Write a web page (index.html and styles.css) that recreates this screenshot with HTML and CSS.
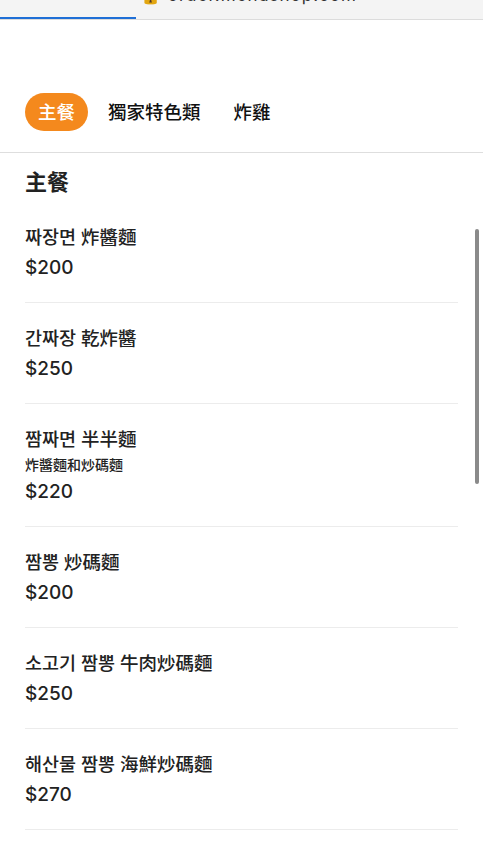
FILE: index.html
```html
<!DOCTYPE html>
<html lang="zh-Hant">
<head>
  <meta charset="UTF-8">
  <meta name="viewport" content="width=device-width, initial-scale=1.0">
  <title>菜單</title>
  <link rel="stylesheet" href="styles.css">
</head>
<body>
  <div class="urlbar">
    <div class="url">&#128274; order.menushop.com</div>
    <div class="progress"></div>
  </div>

  <nav class="tabs">
    <a class="tab active">主餐</a>
    <a class="tab">獨家特色類</a>
    <a class="tab">炸雞</a>
  </nav>

  <main class="menu">
    <h2>主餐</h2>

    <div class="item">
      <div class="name">짜장면 炸醬麵</div>
      <div class="price">$200</div>
    </div>
    <div class="item">
      <div class="name">간짜장 乾炸醬</div>
      <div class="price">$250</div>
    </div>
    <div class="item">
      <div class="name">짬짜면 半半麵</div>
      <div class="desc">炸醬麵和炒碼麵</div>
      <div class="price">$220</div>
    </div>
    <div class="item">
      <div class="name">짬뽕 炒碼麵</div>
      <div class="price">$200</div>
    </div>
    <div class="item">
      <div class="name">소고기 짬뽕 牛肉炒碼麵</div>
      <div class="price">$250</div>
    </div>
    <div class="item">
      <div class="name">해산물 짬뽕 海鮮炒碼麵</div>
      <div class="price">$270</div>
    </div>
  </main>

  <div class="scroll-thumb"></div>
</body>
</html>
```

FILE: styles.css
```css
body {
  margin: 0;
  font-family: Inter, "Noto Sans CJK TC", sans-serif;
  color: #222;
  background: #fff;
  overflow: hidden;
}
.urlbar {
  height: 19px;
  background: #f4f4f4;
  border-bottom: 1px solid #dcdcdc;
  overflow: hidden;
  display: flex;
  flex-direction: column;
}
.url {
  margin-top: -13px;
  padding-left: 140px;
  font-size: 17px;
  line-height: 17px;
  color: #333;
  letter-spacing: 1px;
}
.progress {
  margin-top: 13px;
  width: 136px;
  height: 3px;
  background: #1f6fd6;
}
.tabs {
  display: flex;
  gap: 7px;
  padding: 73px 25px 21px;
  border-bottom: 1px solid #dedede;
}
.tab {
  padding: 6px 13px;
  font-size: 18.5px;
  line-height: 26px;
  font-weight: 500;
  color: #111;
  border-radius: 19px;
}
.tab.active {
  background: #f4891d;
  color: #fff;
}
.menu {
  padding: 0 25px;
}
h2 {
  margin: 14px 0 5px;
  font-size: 22px;
  line-height: 30px;
  font-weight: 700;
}
.item {
  padding: 22px 0 21px;
  border-bottom: 1px solid #ececec;
}
.name {
  font-size: 18.5px;
  line-height: 27px;
  font-weight: 500;
}
.desc {
  font-size: 14px;
  line-height: 20px;
  margin-top: 2px;
  font-weight: 500;
}
.price {
  margin-top: 3px;
  font-size: 19px;
  line-height: 27px;
  font-weight: 500;
}
.scroll-thumb {
  position: fixed;
  left: 475px;
  top: 229px;
  width: 4px;
  height: 255px;
  border-radius: 2px;
  background: #8a8a8a;
}
```
